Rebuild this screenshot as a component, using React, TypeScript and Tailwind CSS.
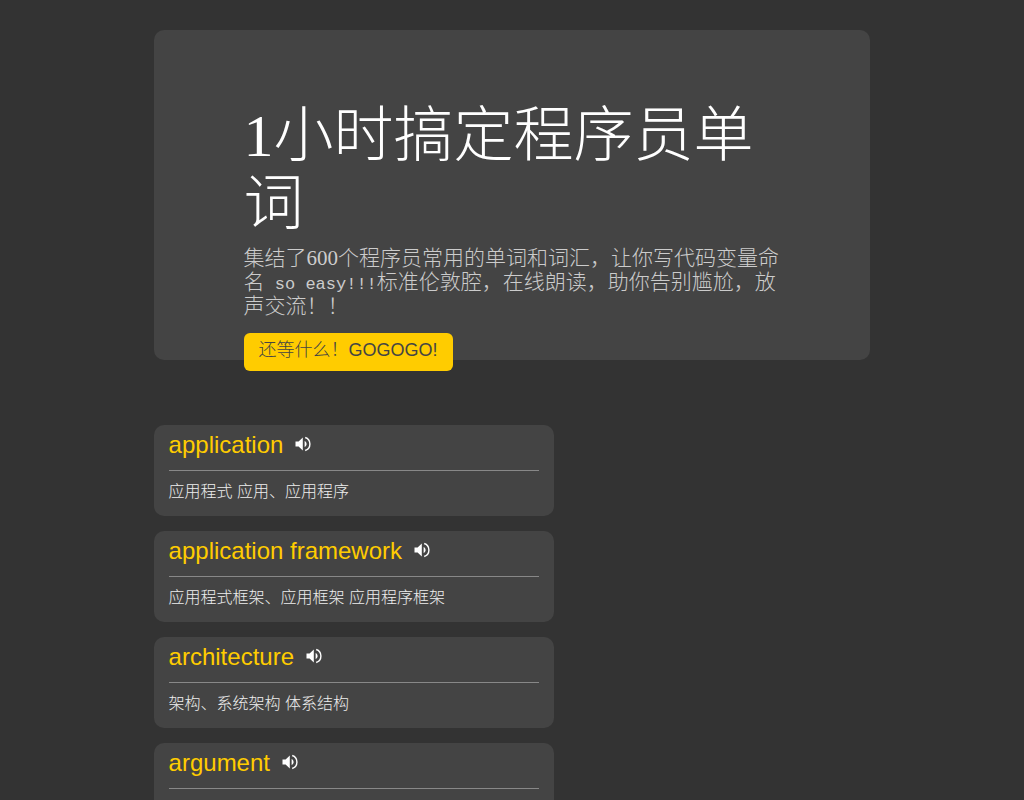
import { useState } from "react";

interface Word {
  en: string;
  zh: string;
}

const words: Word[] = [
  { en: "application", zh: "应用程式 应用、应用程序" },
  { en: "application framework", zh: "应用程式框架、应用框架 应用程序框架" },
  { en: "architecture", zh: "架构、系统架构 体系结构" },
  { en: "argument", zh: "引数、叙述式 参数、实参" },
];

function speak(text: string) {
  if (!("speechSynthesis" in window)) return;
  const utterance = new SpeechSynthesisUtterance(text);
  utterance.lang = "en-GB";
  window.speechSynthesis.speak(utterance);
}

function VolumeIcon() {
  return (
    <svg className="h-4 w-4" viewBox="0 0 16 16" fill="none" aria-hidden="true">
      <path d="M0.5 5.6H3.6L7.8 1.6V14.4L3.6 10.4H0.5Z" fill="currentColor" />
      <path d="M9.6 4.9C10.9 5.5 11.6 6.7 11.6 8S10.9 10.5 9.6 11.1Z" fill="currentColor" />
      <path d="M10.2 1.5C13 2.4 14.9 5 14.9 8S13 13.6 10.2 14.5" stroke="currentColor" strokeWidth={1.4} />
    </svg>
  );
}

function Hero({ onStart }: { onStart: () => void }) {
  return (
    <header className="flex flex-col items-start rounded-[10px] bg-[#444] px-[90px] pt-[72px] font-['Liberation_Serif','Noto_Sans_CJK_SC',serif] font-light">
      <h1 className="text-[60px] leading-[68px] text-white">1小时搞定程序员单词</h1>
      <p className="mt-[8px] text-[21px] leading-[24px] text-[#ccc]">
        集结了600个程序员常用的单词和词汇，让你写代码变量命名
        <span className="font-['Liberation_Mono',monospace] text-[17px] leading-none"> so easy!!!</span>
        标准伦敦腔，在线朗读，助你告别尴尬，放声交流！！
      </p>
      {/* button hangs over the bottom edge of the panel */}
      <button
        onClick={onStart}
        className="mt-[15px] -mb-[11px] cursor-pointer rounded-md bg-[#fc0] px-[15px] pt-[5px] pb-[9px] font-['Liberation_Sans','Noto_Sans_CJK_SC',sans-serif] text-[18px] leading-[24px] text-[#444]"
      >
        还等什么！GOGOGO!
      </button>
    </header>
  );
}

function WordCard({ word, active }: { word: Word; active: boolean }) {
  return (
    <li className={`rounded-[10px] px-[15px] pb-[12px] ${active ? "bg-[#555]" : "bg-[#444]"}`}>
      <div className="flex items-center gap-[12px] border-b border-[#888] pt-[4px] pb-[9px]">
        <h2 className="text-[24px] leading-[32px] font-normal text-[#fc0]">{word.en}</h2>
        <button aria-label={`朗读 ${word.en}`} onClick={() => speak(word.en)} className="cursor-pointer pb-[2px] text-white">
          <VolumeIcon />
        </button>
      </div>
      <p className="pt-[9px] text-[16px] leading-[24px] font-light text-[#eee]">{word.zh}</p>
    </li>
  );
}

export default function App() {
  const [current, setCurrent] = useState<number | null>(null);

  const start = () => {
    setCurrent(0);
    speak(words[0].en);
  };

  return (
    <div className="min-h-screen bg-[#333] py-[30px] font-['Liberation_Sans','Noto_Sans_CJK_SC',sans-serif]">
      <main className="mx-auto w-[70%]">
        <Hero onStart={start} />
        <ul className="mt-[65px] flex max-w-[400px] flex-col gap-[15px]">
          {words.map((word, i) => (
            <WordCard key={word.en} word={word} active={i === current} />
          ))}
        </ul>
      </main>
    </div>
  );
}
